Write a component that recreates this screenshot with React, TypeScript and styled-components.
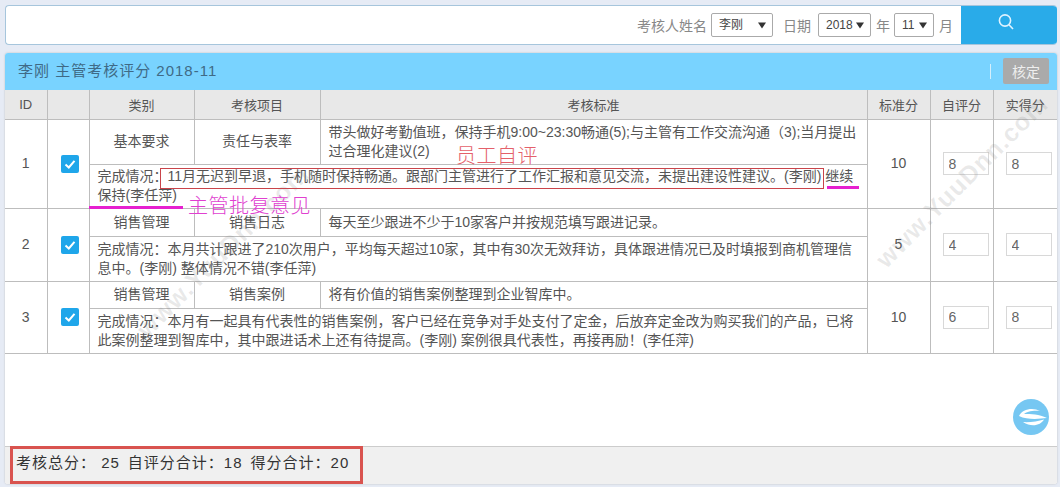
import React from "react";
import styled, { createGlobalStyle } from "styled-components";

const FONT = `"Liberation Sans", "Noto Sans CJK SC", sans-serif`;

const ARROW = `url("data:image/svg+xml,%3Csvg xmlns='http://www.w3.org/2000/svg' width='8' height='7'%3E%3Cpath d='M0 0.5H8L4 6.5Z' fill='%23333'/%3E%3C/svg%3E")`;

const Global = createGlobalStyle`
  html, body { margin: 0; padding: 0; height: 100%; background: #e6ebf5; overflow: hidden; }
  #root { height: 487px; }
  * { box-sizing: border-box; }
`;

const Page = styled.div`
  position: relative;
  width: 1060px;
  height: 487px;
  padding: 5px 3px 3px 5px;
  display: flex;
  flex-direction: column;
  gap: 8px;
  font-family: ${FONT};
  font-size: 14px;
  color: #555;
`;

const SearchBar = styled.div`
  height: 40px;
  flex: none;
  display: flex;
  align-items: center;
  justify-content: flex-end;
  background: #fff;
  border: 1px solid #a6c5dc;
  border-right: 0;
  border-radius: 4px;
  overflow: hidden;
`;

const FieldLabel = styled.span<{ $left?: number; $right?: number }>`
  font-size: 14px;
  color: #888;
  margin-left: ${(p) => p.$left ?? 0}px;
  margin-right: ${(p) => p.$right ?? 0}px;
`;

const Select = styled.select<{ $w: number }>`
  appearance: none;
  width: ${(p) => p.$w}px;
  height: 24px;
  font-family: ${FONT};
  font-size: 12px;
  color: #444;
  background: #fff ${ARROW} no-repeat right 6px center;
  border: 1px solid #aaa;
  border-radius: 2px;
  padding-left: 7px;
`;

const SearchButton = styled.button`
  width: 96px;
  height: 40px;
  margin-left: 8px;
  border: 0;
  background: #29abe9;
  color: #dff3ff;
  display: flex;
  align-items: flex-start;
  justify-content: center;
  padding: 8px 6px 0 0;
`;

const Panel = styled.section`
  flex: 1;
  display: flex;
  flex-direction: column;
  min-height: 0;
  background: #fff;
  border-radius: 3px;
  box-shadow: 0 0 2px #bbb;
`;

const PanelHeader = styled.header`
  height: 37px;
  flex: none;
  background: #79d3ff;
  display: flex;
  align-items: center;
  padding: 0 8px 0 13px;
  border-radius: 3px 3px 0 0;
`;

const PanelTitle = styled.h1`
  margin: 0 0 5px;
  flex: 1;
  font-size: 15px;
  font-weight: 400;
  letter-spacing: 1px;
  color: #3f6a86;
`;

const Divider = styled.span`
  width: 1px;
  height: 15px;
  background: #d5effc;
  margin-right: 12px;
`;

const ApproveButton = styled.button`
  width: 46px;
  height: 26px;
  margin-bottom: 1px;
  border: 0;
  border-radius: 2px;
  background: #aaa;
  color: #eee;
  font-family: ${FONT};
  font-size: 14px;
  padding: 0;
`;

const Table = styled.table`
  width: 100%;
  table-layout: fixed;
  border-collapse: collapse;
  flex: none;
`;

const Th = styled.th`
  height: 29px;
  padding: 0;
  font-weight: 400;
  font-size: 13px;
  text-align: center;
  color: #555;
  background: #e8e8e8;
  border: 1px solid #bdbdbd;
  border-top: 0;
  &:first-child { border-left: 0; }
  &:last-child { border-right: 0; }
`;

const Td = styled.td<{ $h?: number; $align?: string }>`
  height: ${(p) => p.$h ?? 27}px;
  padding: 0 8px;
  font-size: 14px;
  line-height: 19px;
  color: #555;
  white-space: nowrap;
  text-align: ${(p) => p.$align ?? "center"};
  border: 1px solid #bdbdbd;
  &:first-child { border-left: 0; }
  &:last-child { border-right: 0; }
`;

const CheckBox = styled.span`
  display: flex;
  align-items: center;
  justify-content: center;
  width: 18px;
  height: 18px;
  margin-left: 5px;
  border-radius: 2px;
  background: #1fa6ea;
`;

const ScoreInput = styled.input`
  display: block;
  width: 46px;
  height: 23px;
  margin: 0 0 0 4px;
  padding: 0 5px;
  border: 1px solid #d8d8d8;
  font-family: ${FONT};
  font-size: 14px;
  color: #666;
  background: #fff;
`;

const PanelBody = styled.div`
  flex: 1;
  min-height: 0;
`;

const Footer = styled.footer`
  height: 38px;
  flex: none;
  background: #f0f0f0;
  border-top: 1px solid #ccc;
  border-radius: 0 0 3px 3px;
  display: flex;
  align-items: center;
  gap: 8px;
  padding: 0 0 8px 11px;
  font-size: 15px;
  letter-spacing: 1px;
  color: #333;
`;

const Stat = styled.span`
  white-space: pre;
`;

const Watermark = styled.span<{ $x: number; $y: number; $size: number }>`
  position: absolute;
  left: ${(p) => p.$x}px;
  top: ${(p) => p.$y - p.$size}px;
  font-family: "Liberation Sans", sans-serif;
  font-size: ${(p) => p.$size}px;
  line-height: 1;
  font-weight: 700;
  color: rgba(120, 120, 120, 0.16);
  letter-spacing: 1px;
  transform: rotate(-45deg);
  transform-origin: left bottom;
  white-space: nowrap;
  pointer-events: none;
`;

const RedBox = styled.div`
  position: absolute;
  left: 160px;
  top: 168px;
  width: 664px;
  height: 21px;
  border: 1px solid #c9444a;
  pointer-events: none;
`;

const SummaryBox = styled.div`
  position: absolute;
  left: 10px;
  top: 446px;
  width: 353px;
  height: 38px;
  border: 3px solid #d9534f;
  pointer-events: none;
`;

const Underline = styled.div<{ $x: number; $y: number; $w: number }>`
  position: absolute;
  left: ${(p) => p.$x}px;
  top: ${(p) => p.$y}px;
  width: ${(p) => p.$w}px;
  height: 3px;
  background: #e620d0;
`;

const Note = styled.span<{ $x: number; $y: number; $color: string }>`
  position: absolute;
  left: ${(p) => p.$x}px;
  top: ${(p) => p.$y}px;
  font-size: 20px;
  line-height: 24px;
  letter-spacing: 0.5px;
  font-weight: 300;
  color: ${(p) => p.$color};
  white-space: nowrap;
`;

const FloatLogo = styled.svg`
  position: absolute;
  left: 1013px;
  top: 399px;
`;

const Checked = () => (
  <CheckBox>
    <svg width="14" height="14" viewBox="0 0 14 14" fill="none">
      <path d="M2.5 7.5 L5.8 10.5 L11.5 3.8" stroke="#fff" strokeWidth="2" />
    </svg>
  </CheckBox>
);

const rows = [
  {
    id: 1, cat: "基本要求", item: "责任与表率", h1: 45, h2: 44, std: 10, self: 8, real: 8,
    rule: ["带头做好考勤值班，保持手机9:00~23:30畅通(5);与主管有工作交流沟通（3);当月提出", "过合理化建议(2)"],
    done: ["完成情况：11月无迟到早退，手机随时保持畅通。跟部门主管进行了工作汇报和意见交流，未提出建设性建议。(李刚) 继续", "保持(李任萍)"],
  },
  {
    id: 2, cat: "销售管理", item: "销售日志", h1: 27, h2: 45, std: 5, self: 4, real: 4,
    rule: ["每天至少跟进不少于10家客户并按规范填写跟进记录。"],
    done: ["完成情况：本月共计跟进了210次用户，平均每天超过10家，其中有30次无效拜访，具体跟进情况已及时填报到商机管理信", "息中。(李刚) 整体情况不错(李任萍)"],
  },
  {
    id: 3, cat: "销售管理", item: "销售案例", h1: 27, h2: 45, std: 10, self: 6, real: 8,
    rule: ["将有价值的销售案例整理到企业智库中。"],
    done: ["完成情况：本月有一起具有代表性的销售案例，客户已经在竞争对手处支付了定金，后放弃定金改为购买我们的产品，已将", "此案例整理到智库中，其中跟进话术上还有待提高。(李刚) 案例很具代表性，再接再励！(李任萍)"],
  },
];

const widths = [42, 42, 105, 126, 547, 63, 63, 64];
const heads = ["ID", "", "类别", "考核项目", "考核标准", "标准分", "自评分", "实得分"];

export default function App() {
  return (
    <Page>
      <Global />
      <SearchBar>
        <FieldLabel $right={4}>考核人姓名</FieldLabel>
        <Select $w={62} defaultValue="李刚"><option>李刚</option></Select>
        <FieldLabel $left={10} $right={7}>日期</FieldLabel>
        <Select $w={53} defaultValue="2018"><option>2018</option></Select>
        <FieldLabel $left={5} $right={4}>年</FieldLabel>
        <Select $w={40} defaultValue="11"><option>11</option></Select>
        <FieldLabel $left={5}>月</FieldLabel>
        <SearchButton aria-label="搜索">
          <svg width="18" height="18" viewBox="0 0 18 18" fill="none" stroke="currentColor" strokeWidth="1.6">
            <circle cx="8" cy="7.5" r="5.6" />
            <path d="M12 11.8 L16 16" />
          </svg>
        </SearchButton>
      </SearchBar>
      <Panel>
        <PanelHeader>
          <PanelTitle>李刚 主管考核评分 2018-11</PanelTitle>
          <Divider />
          <ApproveButton>核定</ApproveButton>
        </PanelHeader>
        <Table>
          <colgroup>
            {widths.map((w, i) => <col key={i} style={{ width: w }} />)}
          </colgroup>
          <thead>
            <tr>{heads.map((h, i) => <Th key={i}>{h}</Th>)}</tr>
          </thead>
          <tbody>
            {rows.map((r, idx) => (
              <React.Fragment key={r.id}>
                <tr>
                  <Td rowSpan={2}>{r.id}</Td>
                  <Td rowSpan={2}><Checked /></Td>
                  <Td $h={r.h1 + (idx === 1 ? 1 : 0)}>{r.cat}</Td>
                  <Td $h={r.h1 + (idx === 1 ? 1 : 0)}>{r.item}</Td>
                  <Td $h={r.h1 + (idx === 1 ? 1 : 0)} $align="left">
                    {r.rule.map((l, i) => <React.Fragment key={i}>{i > 0 && <br />}{l}</React.Fragment>)}
                  </Td>
                  <Td rowSpan={2}>{r.std}</Td>
                  <Td rowSpan={2}><ScoreInput defaultValue={r.self} /></Td>
                  <Td rowSpan={2}><ScoreInput defaultValue={r.real} /></Td>
                </tr>
                <tr>
                  <Td $h={r.h2} $align="left" colSpan={3}>
                    {r.done[0]}<br />{r.done[1]}
                  </Td>
                </tr>
              </React.Fragment>
            ))}
          </tbody>
        </Table>
        <PanelBody />
        <Footer>
          <Stat>考核总分： 25</Stat>
          <Stat>自评分合计：18</Stat>
          <Stat>得分合计：20</Stat>
        </Footer>
      </Panel>
      <Watermark $x={150} $y={342} $size={25}>www.YuuDnn.com</Watermark>
      <Watermark $x={889} $y={272} $size={25}>www.YuuDnn.com</Watermark>
      <RedBox />
      <SummaryBox />
      <Underline $x={89} $y={206} $w={94} />
      <Underline $x={827} $y={186} $w={32} />
      <Note $x={456} $y={144} $color="#e4606a">员工自评</Note>
      <Note $x={188} $y={194} $color="#e040d0">主管批复意见</Note>
      <FloatLogo width="36" height="36" viewBox="0 0 36 36">
        <circle cx="18" cy="18" r="18" fill="#76c7f2" />
        <path d="M6 17 C9 10 20 8 27 12 C20 11 13 13 11 15 C18 15 26 15 34 19 C26 20 14 21 6 17 Z" fill="#fff" />
        <path d="M10 23 C16 23.5 25 22.5 31 20.5 C28 26 19 29 10 23 Z" fill="#fff" />
      </FloatLogo>
    </Page>
  );
}
